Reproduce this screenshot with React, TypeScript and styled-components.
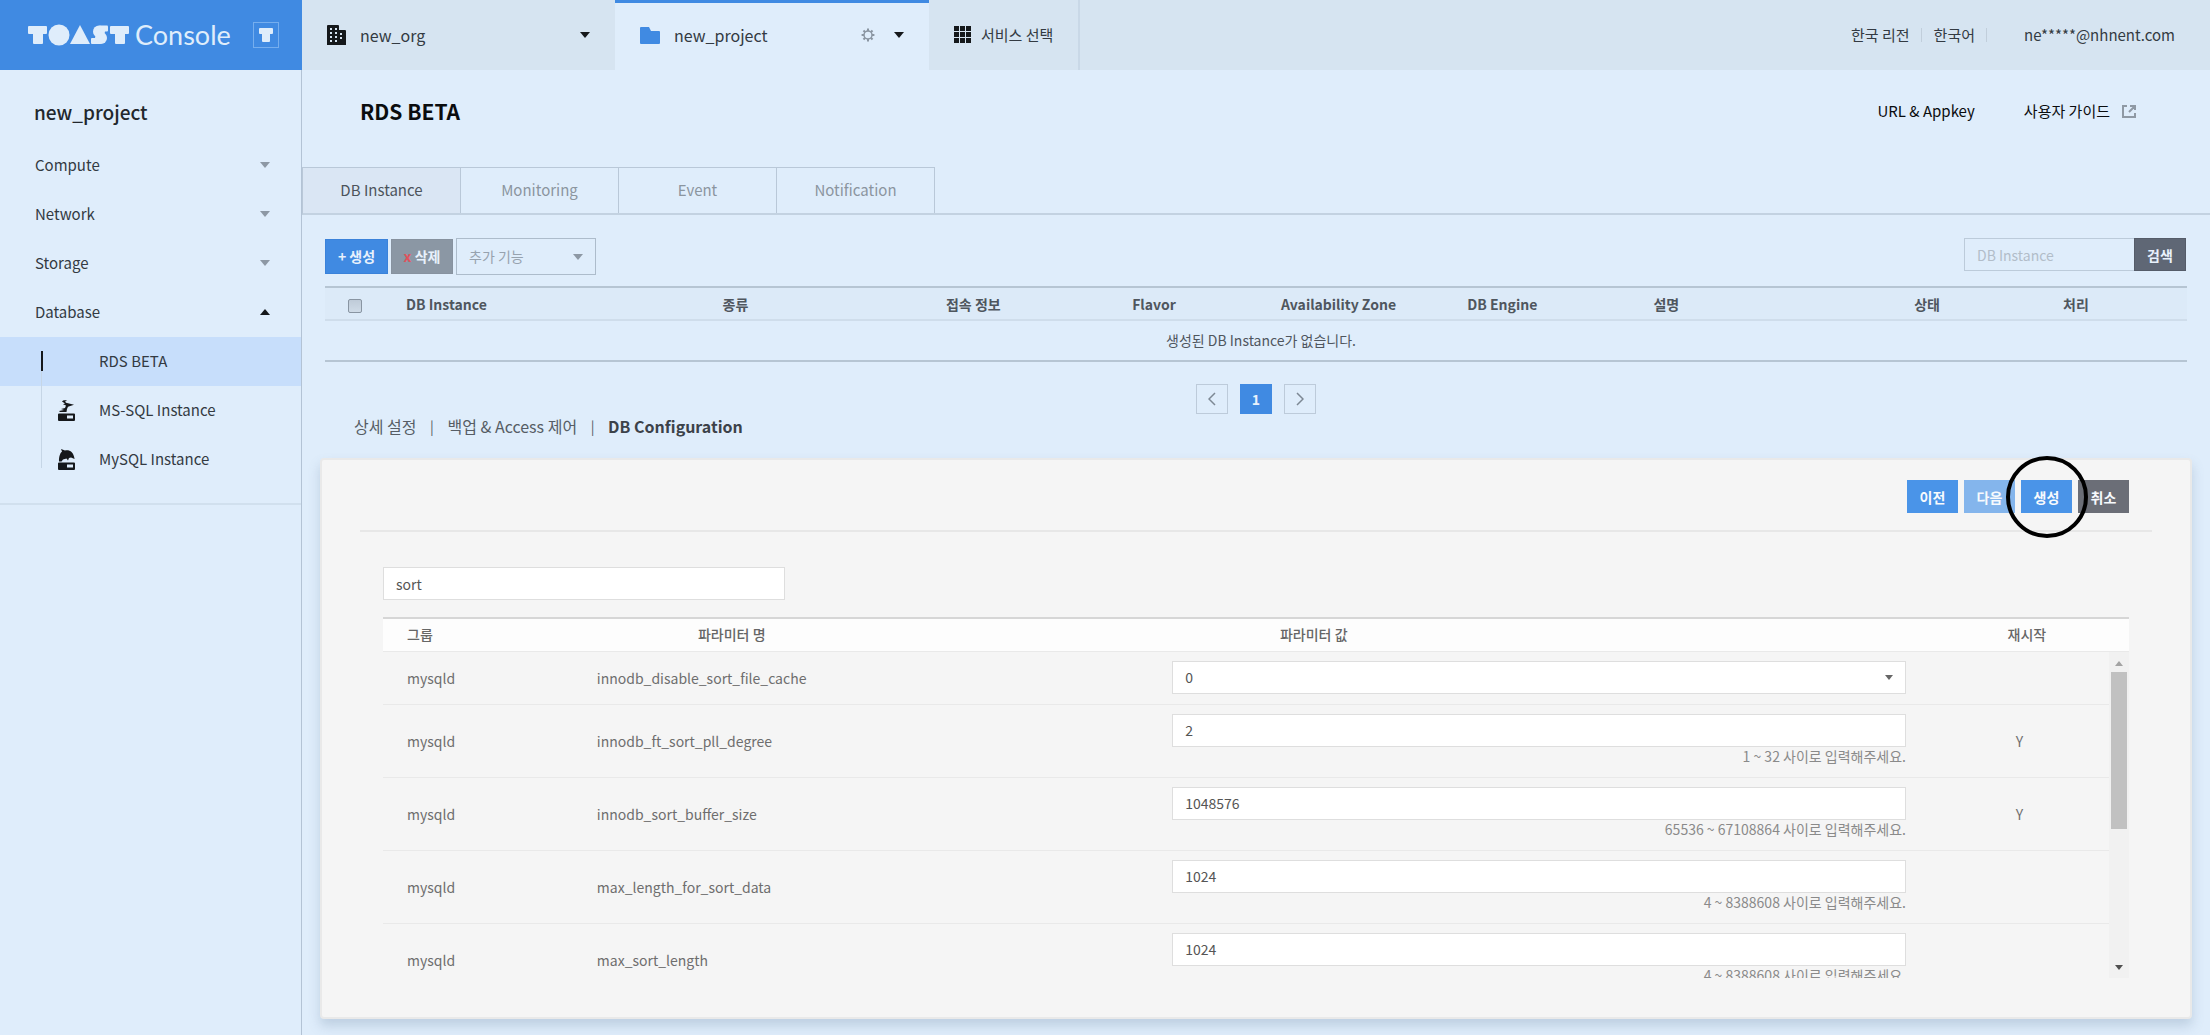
import React, { useState } from "react";
import styled, { createGlobalStyle } from "styled-components";

const GlobalStyle = createGlobalStyle`
  *, *::before, *::after { box-sizing: border-box; }
  body {
    margin: 0;
    background: #dfedfb;
    color: #333a42;
    font-family: "Noto Sans CJK KR", "Noto Sans", sans-serif;
    font-size: 14px;
    line-height: 20px;
  }
  button, input, select { font: inherit; color: inherit; margin: 0; }
  button { cursor: pointer; white-space: nowrap; }
  a { color: inherit; text-decoration: none; }
  h1, h2, p, ul { margin: 0; padding: 0; }
  ul { list-style: none; }
`;

const Page = styled.div`
  display: flex;
  min-height: 100vh;
`;

const Sidebar = styled.aside`
  flex: none;
  width: 302px;
  border-right: 1px solid #b3c3d5;
`;

const Brand = styled.div`
  display: flex;
  align-items: center;
  height: 70px;
  margin-right: -1px;
  padding: 0 23px 0 28px;
  background: #408ae2;
  color: #dfedfb;
`;

const BrandLink = styled.a`
  display: flex;
  align-items: center;
  gap: 5px;
  flex: 1;
`;

const BrandName = styled.span`
  font-family: Lato, sans-serif;
  font-size: 27px;
  line-height: 32px;
`;

const BrandButton = styled.button`
  display: grid;
  place-items: center;
  width: 26px;
  height: 26px;
  padding: 0;
  border: 1px solid #76aeee;
  background: transparent;
  color: #dfedfb;
`;

const ProjectName = styled.h2`
  padding: 29px 34px 16px;
  font-size: 19px;
  line-height: 26px;
  font-weight: 500;
  color: #22272c;
`;

const MenuList = styled.ul`
  padding-bottom: 19px;
  border-bottom: 2px solid #d1e0ee;
`;

const MenuButton = styled.button`
  display: flex;
  align-items: center;
  justify-content: space-between;
  width: 100%;
  height: 49px;
  padding: 0 31px 2px 35px;
  border: 0;
  background: transparent;
  font-size: 15px;
`;

const SubList = styled.ul`
  position: relative;
  &::before {
    content: "";
    position: absolute;
    left: 41px;
    top: 34px;
    bottom: 16px;
    width: 1px;
    background: #c6d6e6;
  }
`;

const SubLink = styled.a<{ $active?: boolean }>`
  display: flex;
  align-items: center;
  height: 49px;
  padding: 0 0 2px 41px;
  font-size: 15px;
  background: ${(p) => (p.$active ? "#c7defb" : "transparent")};
`;

const SubMark = styled.span<{ $active?: boolean }>`
  width: 58px;
  height: 20px;
  padding-left: ${(p) => (p.$active ? "0" : "17px")};
  border-left: ${(p) => (p.$active ? "2px solid #15181b" : "0")};
`;

const Caret = styled.span<{ $up?: boolean; $color?: string; $small?: boolean }>`
  flex: none;
  border: ${(p) => (p.$small ? "4px" : "5px")} solid transparent;
  border-top: ${(p) => (p.$up ? "0" : `${p.$small ? 5 : 6}px solid ${p.$color ?? "#15181b"}`)};
  border-bottom: ${(p) => (p.$up ? `${p.$small ? 5 : 6}px solid ${p.$color ?? "#15181b"}` : "0")};
`;

const Main = styled.div`
  flex: 1;
  min-width: 0;
`;

const TopBar = styled.header`
  display: flex;
  height: 70px;
  background: #d6e4f1;
`;

const TopTab = styled.div<{ $active?: boolean }>`
  display: flex;
  align-items: center;
  width: ${(p) => (p.$active ? "314px" : "313px")};
  padding: 0 20px 0 25px;
  border-top: 3px solid ${(p) => (p.$active ? "#408ae2" : "transparent")};
  border-bottom: 3px solid transparent;
  background: ${(p) => (p.$active ? "#dfedfb" : "transparent")};
`;

const TopTabName = styled.a`
  display: flex;
  align-items: center;
  gap: 14px;
  flex: 1;
  font-size: 16px;
`;

const TopTabTools = styled.div`
  display: flex;
  gap: 9px;
`;

const IconButton = styled.button`
  display: grid;
  place-items: center;
  height: 24px;
  padding: 0 5px;
  border: 0;
  background: transparent;
  color: #8a95a1;
`;

const ServiceButton = styled.button`
  display: flex;
  align-items: center;
  gap: 10px;
  width: 151px;
  padding: 0 0 1px 25px;
  border: 0;
  border-right: 2px solid #c9d8e7;
  background: transparent;
  font-size: 15px;
`;

const Account = styled.nav`
  display: flex;
  align-items: center;
  margin-left: auto;
  padding-right: 35px;
  font-size: 15px;
`;

const AccountLink = styled.a`
  padding-right: 11px;
  margin-right: 12px;
  border-right: 1px solid #c1cedb;
  line-height: 14px;
`;

const Email = styled.a`
  padding-left: 25px;
`;

const TitleRow = styled.div`
  display: flex;
  align-items: center;
  justify-content: space-between;
  height: 84px;
  margin-bottom: 13px;
  padding: 0 74px 2px 58px;
  color: #0a0c0e;
`;

const Title = styled.h1`
  font-size: 21px;
  line-height: 30px;
  font-weight: 700;
`;

const TitleLinks = styled.nav`
  display: flex;
  gap: 49px;
  font-size: 15px;
`;

const GuideLink = styled.a`
  display: flex;
  align-items: center;
  gap: 12px;
`;

const Tabs = styled.div`
  display: flex;
  border-bottom: 2px solid #c3d2e1;
  border-left: 1px solid #b9c8d8;
`;

const Tab = styled.button<{ $active?: boolean }>`
  width: 158px;
  height: 46px;
  padding: 0 0 1px;
  border: 0 solid #b9c8d8;
  border-width: 1px 1px 0 0;
  background: ${(p) => (p.$active ? "#dae6f4" : "transparent")};
  color: ${(p) => (p.$active ? "#4c535b" : "#8b959f")};
  font-size: 15px;
`;

const Content = styled.main`
  padding: 23px 18px 17px;
`;

const ListArea = styled.section`
  padding: 0 5px;
`;

const Toolbar = styled.div`
  display: flex;
  align-items: center;
  justify-content: space-between;
  margin-bottom: 11px;
`;

const Actions = styled.div`
  display: flex;
  align-items: center;
  gap: 3px;
`;

const ActionButton = styled.button<{ $muted?: boolean }>`
  width: ${(p) => (p.$muted ? "62px" : "63px")};
  height: 35px;
  padding: 0 0 1px;
  border: 1px solid ${(p) => (p.$muted ? "#87929f" : "#3a82da")};
  background: ${(p) => (p.$muted ? "#8b97a4" : "#408ae2")};
  color: #e8f1fc;
  font-weight: 700;
`;

const Cross = styled.span`
  color: #e0525c;
`;

const SelectBox = styled.span<{ $outlined?: boolean }>`
  display: flex;
  align-items: center;
  width: ${(p) => (p.$outlined ? "140px" : "100%")};
  height: ${(p) => (p.$outlined ? "37px" : "33px")};
  padding-right: 12px;
  border: 1px solid ${(p) => (p.$outlined ? "#adbccb" : "#dedede")};
  background: ${(p) => (p.$outlined ? "transparent" : "#fff")};
  color: ${(p) => (p.$outlined ? "#97a2ae" : "#555")};
`;

const Select = styled.select`
  flex: 1;
  min-width: 0;
  height: 100%;
  padding: 0 0 1px 12px;
  border: 0;
  outline: 0;
  appearance: none;
  background: transparent;
`;

const SearchForm = styled.form`
  display: flex;
  margin: 0 1px 4px 0;
`;

const SearchInput = styled.input`
  width: 170px;
  height: 33px;
  padding: 0 12px;
  border: 1px solid #bccbda;
  border-right: 0;
  border-radius: 0;
  background: transparent;
  &::placeholder { color: #b2bdc9; }
`;

const SearchButton = styled.button`
  width: 52px;
  height: 33px;
  padding: 0;
  border: 1px solid #555c69;
  background: #5f6775;
  color: #e8f1fc;
  font-weight: 700;
`;

const InstanceTable = styled.table`
  width: 100%;
  table-layout: fixed;
  border-collapse: collapse;
  border-top: 2px solid #b6c5d3;
  border-bottom: 2px solid #b6c5d3;
  color: #4f565e;
`;

const Col = styled.col<{ $w?: string }>`
  width: ${(p) => p.$w ?? "auto"};
`;

const HeadCell = styled.th`
  height: 33px;
  padding: 0 0 0 20px;
  background: #dceaf8;
  border-bottom: 2px solid #cfddeb;
  font-weight: 700;
  text-align: left;
  line-height: 18px;
`;

const CheckCell = styled(HeadCell)`
  padding-left: 23px;
`;

const CheckBox = styled.input`
  display: block;
  width: 14px;
  height: 14px;
  margin: 5px 0 0;
  appearance: none;
  border: 1px solid #8995a2;
  border-radius: 2px;
  background: linear-gradient(#bfcbd8, #cfdbe7);
`;

const EmptyCell = styled.td`
  height: 41px;
  padding: 0 10px 2px 20px;
  text-align: center;
`;

const Pagination = styled.nav`
  display: flex;
  justify-content: center;
  gap: 12px;
  padding: 22px 0 2px;
`;

const PageButton = styled.button<{ $active?: boolean }>`
  display: grid;
  place-items: center;
  width: 32px;
  height: 30px;
  padding: 0;
  border: 1px solid ${(p) => (p.$active ? "#408ae2" : "#bdcbda")};
  background: ${(p) => (p.$active ? "#408ae2" : "transparent")};
  color: ${(p) => (p.$active ? "#e8f1fc" : "#7d8894")};
  font-weight: 700;
`;

const Steps = styled.nav`
  display: flex;
  align-items: center;
  padding: 0 0 22px 29px;
  font-size: 16px;
  color: #565d65;
`;

const StepLink = styled.a<{ $active?: boolean }>`
  font-weight: ${(p) => (p.$active ? 700 : 400)};
  color: ${(p) => (p.$active ? "#3c4249" : "inherit")};
`;

const StepBar = styled.span`
  width: 31px;
  text-align: center;
  font-size: 14px;
`;

const Panel = styled.section`
  padding: 20px 38px 39px;
  border: 2px solid #e9e9e9;
  border-radius: 4px;
  background: #f5f5f5;
  box-shadow: 0 7px 12px rgba(90, 120, 150, 0.25);
`;

const PanelActions = styled.div`
  display: flex;
  justify-content: flex-end;
  gap: 6px;
  padding: 0 23px 17px 0;
  border-bottom: 2px solid #e7e7e7;
`;

const Spot = styled.span`
  position: relative;
  display: flex;
`;

const Ring = styled.span`
  position: absolute;
  left: 50%;
  top: 50%;
  width: 82px;
  height: 82px;
  margin: -41px 0 0 -41px;
  border: 4px solid #000;
  border-radius: 50%;
  z-index: 1;
  pointer-events: none;
`;

const PanelButton = styled.button<{ $tone: string }>`
  width: 51px;
  height: 33px;
  padding: 0;
  border: 0;
  background: ${(p) => p.$tone};
  color: #f7fafd;
  font-weight: 700;
`;

const PanelBody = styled.div`
  padding: 35px 23px 0;
`;

const FilterInput = styled.input`
  display: block;
  width: 402px;
  height: 33px;
  margin-bottom: 17px;
  padding: 0 12px;
  border: 1px solid #dedede;
  background: #fff;
  color: #555;
`;

const ParamHead = styled.table`
  width: 100%;
  table-layout: fixed;
  border-collapse: collapse;
  border-top: 2px solid #d6d6d6;
  background: #fdfdfd;
  color: #666;
`;

const ParamHeadCell = styled.th`
  height: 33px;
  padding: 0 0 2px 24px;
  border-bottom: 1px solid #e9e9e9;
  font-weight: 500;
  text-align: left;
  line-height: 18px;
`;

const ScrollArea = styled.div`
  display: flex;
  height: 326px;
`;

const ScrollView = styled.div`
  flex: 1;
  min-width: 0;
  overflow-y: auto;
  scrollbar-width: none;
`;

const ScrollTrack = styled.div`
  display: flex;
  flex-direction: column;
  align-items: center;
  width: 20px;
  padding: 9px 0 8px;
  background: #f1f1f1;
`;

const ScrollThumb = styled.div`
  width: 16px;
  height: 157px;
  margin: 6px 0 auto;
  background: #c1c1c1;
`;

const ParamTable = styled.table`
  width: 100%;
  table-layout: fixed;
  border-collapse: separate;
  border-spacing: 0;
  color: #6e6e6e;
`;

const ParamCell = styled.td<{ $center?: boolean }>`
  height: 53px;
  padding: 9px 24px;
  border-bottom: 1px solid #e9e9e9;
  text-align: ${(p) => (p.$center ? "center" : "left")};
`;

const ParamInput = styled.input`
  display: block;
  width: 100%;
  height: 33px;
  padding: 0 12px;
  border: 1px solid #dedede;
  border-radius: 0;
  background: #fff;
  color: #555;
`;

const Hint = styled.p`
  padding-bottom: 3px;
  line-height: 18px;
  text-align: right;
  color: #8a8a8a;
`;

const ToastMark = () => (
  <svg width="102" height="24" viewBox="0 0 102 24" fill="currentColor" role="img" aria-label="TOAST">
    <rect x="0" y="3" width="19" height="8" rx="1" />
    <rect x="5" y="3" width="10" height="18" rx="1" />
    <circle cx="31" cy="12" r="10.500" />
    <polygon points="52,2 62,21 42,21" />
    <circle cx="71" cy="8.500" r="6" />
    <rect x="71" y="2.500" width="9" height="6" rx="1" />
    <circle cx="73" cy="15" r="6" />
    <rect x="63" y="15" width="10" height="6" rx="1" />
    <rect x="82" y="3" width="19" height="8" rx="1" />
    <rect x="87" y="3" width="10" height="18" rx="1" />
  </svg>
);

const BuildingIcon = () => (
  <svg width="19" height="20" viewBox="0 0 19 20" fill="#15181b" aria-hidden="true">
    <path d="M1 0h10q1 0 1 1v4h6q1 0 1 1v14H0V1q0-1 1-1z" />
    <g fill="#d6e4f1">
      {[3, 7, 11, 15].map((y) => [3, 8].map((x) => <rect key={`${x}-${y}`} x={x} y={y} width="2" height="2" />))}
      <rect x="13" y="8" width="2" height="2" />
      <rect x="13" y="12" width="2" height="2" />
    </g>
  </svg>
);

const FolderIcon = () => (
  <svg width="20" height="17" viewBox="0 0 20 17" fill="#408ae2" aria-hidden="true">
    <path d="M1 0h8l2 4h8q1 0 1 1v11q0 1-1 1H1q-1 0-1-1V1q0-1 1-1z" />
  </svg>
);

const GearIcon = () => (
  <svg width="14" height="14" viewBox="0 0 14 14" fill="none" stroke="currentColor" aria-hidden="true">
    <circle cx="7" cy="7" r="4" strokeWidth="1.500" />
    {[0, 45, 90, 135, 180, 225, 270, 315].map((a) => (
      <path key={a} d="M7 3V.6" strokeWidth="2" transform={`rotate(${a} 7 7)`} />
    ))}
  </svg>
);

const GridIcon = () => (
  <svg width="17" height="17" viewBox="0 0 17 17" fill="#15181b" aria-hidden="true">
    {[0, 6, 12].map((y) => [0, 6, 12].map((x) => <rect key={`${x}-${y}`} x={x} y={y} width="5" height="5" />))}
  </svg>
);

const ExternalIcon = () => (
  <svg width="14" height="13" viewBox="0 0 14 13" fill="none" stroke="#8f99a4" strokeWidth="2" aria-hidden="true">
    <path d="M5 1H1v11h12V8M8 1h5v4M12 2L7 7" />
  </svg>
);

const ChevronIcon = ({ next }: { next?: boolean }) => (
  <svg width="8" height="14" viewBox="0 0 8 14" fill="none" stroke="currentColor" strokeWidth="1.500" aria-hidden="true">
    <path d={next ? "M1 1l6 6-6 6" : "M7 1L1 7l6 6"} />
  </svg>
);

const MsSqlIcon = () => (
  <svg width="18" height="21" viewBox="0 0 18 21" fill="#15181b" aria-hidden="true">
    <path d="M4 1.500C5 .3 7 0 9 .8L7 1.600l1 1.200 8 2-6 2L9 9l-.5 3H2l-1-1 5-1-3-1 4-1 1-2.500-3-1.200 2-.8z" />
    <path fillRule="evenodd" d="M1 13.500h15q1 0 1 1V20q0 1-1 1H1q-1 0-1-1v-5.500q0-1 1-1zM9 15.500v3h6v-3z" />
  </svg>
);

const MySqlIcon = () => (
  <svg width="18" height="21" viewBox="0 0 18 21" fill="#15181b" aria-hidden="true">
    <path d="M3 0l4 1.500c5-1 8 2 9 6l.6 2.500-3.600-1.500L11 9l-1 2.500L8.500 9.600 5 10.500 3.500 12.500H1C.8 8 2 4 4 2.500z" />
    <path fillRule="evenodd" d="M1 13.500h15q1 0 1 1V20q0 1-1 1H1q-1 0-1-1v-5.500q0-1 1-1zM9 15.500v3h6v-3z" />
  </svg>
);

const BrandIcon = () => (
  <svg width="14" height="14" viewBox="0 0 14 14" fill="currentColor" aria-hidden="true">
    <rect width="14" height="6" rx="1" />
    <rect x="3" width="8" height="14" rx="1" />
  </svg>
);

const MENU = ["Compute", "Network", "Storage"];
const TABS = ["DB Instance", "Monitoring", "Event", "Notification"];

const COLUMNS = [
  { name: "DB Instance", width: "17%" },
  { name: "종류", width: "12%" },
  { name: "접속 정보", width: "10%" },
  { name: "Flavor", width: "8%" },
  { name: "Availability Zone", width: "10%" },
  { name: "DB Engine", width: "10%" },
  { name: "설명", width: "14%" },
  { name: "상태", width: "8%" },
  { name: "처리", width: undefined },
];

type Param = { name: string; value: string; range?: string; restart?: boolean };

const PARAMS: Param[] = [
  { name: "innodb_disable_sort_file_cache", value: "0" },
  { name: "innodb_ft_sort_pll_degree", value: "2", range: "1 ~ 32", restart: true },
  { name: "innodb_sort_buffer_size", value: "1048576", range: "65536 ~ 67108864", restart: true },
  { name: "max_length_for_sort_data", value: "1024", range: "4 ~ 8388608" },
  { name: "max_sort_length", value: "1024", range: "4 ~ 8388608" },
];

function ParamRow({ param }: { param: Param }) {
  const [value, setValue] = useState(param.value);
  return (
    <tr>
      <ParamCell>mysqld</ParamCell>
      <ParamCell>{param.name}</ParamCell>
      <ParamCell>
        {param.range ? (
          <>
            <ParamInput aria-label={param.name} value={value} onChange={(e) => setValue(e.target.value)} />
            <Hint>{param.range} 사이로 입력해주세요.</Hint>
          </>
        ) : (
          <SelectBox>
            <Select aria-label={param.name} value={value} onChange={(e) => setValue(e.target.value)}>
              <option>0</option>
            </Select>
            <Caret $small $color="#666" />
          </SelectBox>
        )}
      </ParamCell>
      <ParamCell $center>{param.restart ? "Y" : ""}</ParamCell>
    </tr>
  );
}

export default function App() {
  const [filter, setFilter] = useState("sort");
  return (
    <>
      <GlobalStyle />
      <Page>
        <Sidebar>
          <Brand>
            <BrandLink href="#">
              <ToastMark />
              <BrandName>Console</BrandName>
            </BrandLink>
            <BrandButton aria-label="TOAST">
              <BrandIcon />
            </BrandButton>
          </Brand>
          <ProjectName>new_project</ProjectName>
          <MenuList>
            {MENU.map((name) => (
              <li key={name}>
                <MenuButton>
                  {name}
                  <Caret $color="#8d98a4" />
                </MenuButton>
              </li>
            ))}
            <li>
              <MenuButton aria-expanded="true">
                Database
                <Caret $up />
              </MenuButton>
              <SubList>
                <li>
                  <SubLink href="#" $active>
                    <SubMark $active />
                    RDS BETA
                  </SubLink>
                </li>
                <li>
                  <SubLink href="#">
                    <SubMark><MsSqlIcon /></SubMark>
                    MS-SQL Instance
                  </SubLink>
                </li>
                <li>
                  <SubLink href="#">
                    <SubMark><MySqlIcon /></SubMark>
                    MySQL Instance
                  </SubLink>
                </li>
              </SubList>
            </li>
          </MenuList>
        </Sidebar>

        <Main>
          <TopBar>
            <TopTab>
              <TopTabName href="#">
                <BuildingIcon />
                new_org
              </TopTabName>
              <IconButton aria-label="new_org"><Caret /></IconButton>
            </TopTab>
            <TopTab $active>
              <TopTabName href="#">
                <FolderIcon />
                new_project
              </TopTabName>
              <TopTabTools>
                <IconButton aria-label="settings"><GearIcon /></IconButton>
                <IconButton aria-label="new_project"><Caret /></IconButton>
              </TopTabTools>
            </TopTab>
            <ServiceButton>
              <GridIcon />
              서비스 선택
            </ServiceButton>
            <Account>
              <AccountLink href="#">한국 리전</AccountLink>
              <AccountLink href="#">한국어</AccountLink>
              <Email href="#">ne*****@nhnent.com</Email>
            </Account>
          </TopBar>

          <TitleRow>
            <Title>RDS BETA</Title>
            <TitleLinks>
              <a href="#">URL &amp; Appkey</a>
              <GuideLink href="#">
                사용자 가이드
                <ExternalIcon />
              </GuideLink>
            </TitleLinks>
          </TitleRow>

          <Tabs>
            {TABS.map((name, i) => (
              <Tab key={name} $active={i === 0}>{name}</Tab>
            ))}
          </Tabs>

          <Content>
            <ListArea>
              <Toolbar>
                <Actions>
                  <ActionButton>+ 생성</ActionButton>
                  <ActionButton $muted><Cross>x</Cross> 삭제</ActionButton>
                  <SelectBox $outlined>
                    <Select aria-label="추가 기능">
                      <option>추가 기능</option>
                    </Select>
                    <Caret $color="#8d98a4" />
                  </SelectBox>
                </Actions>
                <SearchForm onSubmit={(e) => e.preventDefault()}>
                  <SearchInput aria-label="DB Instance" placeholder="DB Instance" />
                  <SearchButton>검색</SearchButton>
                </SearchForm>
              </Toolbar>
              <InstanceTable>
                <colgroup>
                  <Col $w="61px" />
                  {COLUMNS.map((c) => <Col key={c.name} $w={c.width} />)}
                </colgroup>
                <thead>
                  <tr>
                    <CheckCell><CheckBox type="checkbox" aria-label="DB Instance" /></CheckCell>
                    {COLUMNS.map((c) => <HeadCell key={c.name}>{c.name}</HeadCell>)}
                  </tr>
                </thead>
                <tbody>
                  <tr>
                    <EmptyCell colSpan={10}>생성된 DB Instance가 없습니다.</EmptyCell>
                  </tr>
                </tbody>
              </InstanceTable>
              <Pagination>
                <PageButton aria-label="previous"><ChevronIcon /></PageButton>
                <PageButton $active>1</PageButton>
                <PageButton aria-label="next"><ChevronIcon next /></PageButton>
              </Pagination>
              <Steps>
                <StepLink href="#">상세 설정</StepLink>
                <StepBar>|</StepBar>
                <StepLink href="#">백업 &amp; Access 제어</StepLink>
                <StepBar>|</StepBar>
                <StepLink href="#" $active>DB Configuration</StepLink>
              </Steps>
            </ListArea>

            <Panel>
              <PanelActions>
                <PanelButton $tone="#4a94e8">이전</PanelButton>
                <PanelButton $tone="#84b5ec">다음</PanelButton>
                <Spot>
                  <PanelButton $tone="#4a94e8">생성</PanelButton>
                  <Ring />
                </Spot>
                <PanelButton $tone="#6b6e77">취소</PanelButton>
              </PanelActions>
              <PanelBody>
                <FilterInput aria-label="파라미터 명" value={filter} onChange={(e) => setFilter(e.target.value)} />
                <ParamHead>
                  <colgroup>
                    <Col $w="calc(100% / 6)" />
                    <Col $w="calc(100% / 3)" />
                    <Col />
                    <Col $w="calc(100% / 12)" />
                  </colgroup>
                  <thead>
                    <tr>
                      <ParamHeadCell>그룹</ParamHeadCell>
                      <ParamHeadCell>파라미터 명</ParamHeadCell>
                      <ParamHeadCell>파라미터 값</ParamHeadCell>
                      <ParamHeadCell>재시작</ParamHeadCell>
                    </tr>
                  </thead>
                </ParamHead>
                <ScrollArea>
                  <ScrollView>
                    <ParamTable>
                      <colgroup>
                        <Col $w="11%" />
                        <Col $w="calc(100% / 3)" />
                        <Col />
                        <Col $w="179px" />
                      </colgroup>
                      <tbody>
                        {PARAMS.map((p) => <ParamRow key={p.name} param={p} />)}
                      </tbody>
                    </ParamTable>
                  </ScrollView>
                  <ScrollTrack aria-hidden="true">
                    <Caret $small $up $color="#a3a3a3" />
                    <ScrollThumb />
                    <Caret $small $color="#505050" />
                  </ScrollTrack>
                </ScrollArea>
              </PanelBody>
            </Panel>
          </Content>
        </Main>
      </Page>
    </>
  );
}
